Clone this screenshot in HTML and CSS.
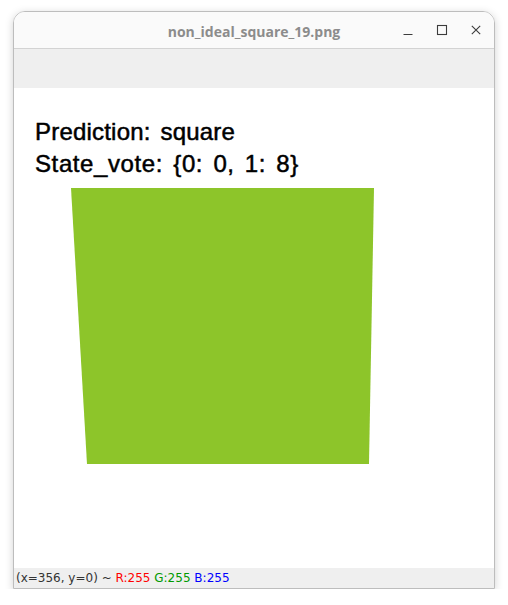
FILE: index.html
```html
<!DOCTYPE html>
<html>
<head>
<meta charset="utf-8">
<link rel="stylesheet" href="styles.css">
</head>
<body>
<div class="window">
  <div class="titlebar">
    <div class="title">non_ideal_square_19.png</div>
    <div class="controls">
      <svg class="btn" width="12" height="12" viewBox="0 0 12 12"><path d="M1.5 10.5h9" stroke="#3c3c3c" stroke-width="1.1" fill="none"/></svg>
      <svg class="btn" width="12" height="12" viewBox="0 0 12 12"><rect x="1.5" y="1.5" width="9" height="9" stroke="#3c3c3c" stroke-width="1.1" fill="none"/></svg>
      <svg class="btn" width="12" height="12" viewBox="0 0 12 12"><path d="M1.8 1.8L10.2 10.2M10.2 1.8L1.8 10.2" stroke="#3c3c3c" stroke-width="1.1" fill="none"/></svg>
    </div>
  </div>
  <div class="toolbar"></div>
  <div class="canvas">
    <div class="label">Prediction: square</div>
    <div class="label label-wide">State_vote: {0: 0, 1: 8}</div>
    <div class="shape"></div>
  </div>
  <div class="status">(x=356, y=0) ~ <span class="r">R:255</span> <span class="g">G:255</span> <span class="b">B:255</span></div>
</div>
</body>
</html>
```
FILE: styles.css
```css
html, body {
  margin: 0;
  padding: 0;
  background: #ffffff;
}
.window {
  margin: 11px 0 0 13px;
  width: 480px;
  border: 1px solid #bdbdbd;
  border-radius: 12px 12px 0 0;
  overflow: hidden;
  box-shadow: 0 2px 8px rgba(0,0,0,0.18);
}
.titlebar {
  height: 36px;
  background: #fafafa;
  border-bottom: 1px solid #d3d3d3;
  display: flex;
  align-items: center;
  justify-content: center;
  position: relative;
}
.title {
  font-family: "Open Sans", "DejaVu Sans", sans-serif;
  font-weight: 700;
  font-size: 14px;
  color: #8c8c8c;
  margin-top: 2px;
}
.controls {
  position: absolute;
  right: 12px;
  top: 12px;
  display: flex;
  gap: 22px;
}
.btn {
  display: block;
}
.toolbar {
  height: 39px;
  background: #efefef;
}
.canvas {
  height: 480px;
  background: #ffffff;
  display: flex;
  flex-direction: column;
}
.label {
  font-family: "Liberation Sans", Arial, sans-serif;
  font-size: 24px;
  line-height: 32px;
  color: #000;
  padding-left: 21px;
  letter-spacing: 0.2px;
  word-spacing: 3px;
  -webkit-text-stroke: 0.5px #000;
}
.label-wide {
  letter-spacing: 0.6px;
}
.label:first-child {
  margin-top: 28px;
}
.shape {
  margin-top: 8px;
  margin-left: 57px;
  width: 303px;
  height: 276px;
  background: #8dc52a;
  clip-path: polygon(0 0, 303px 0, 298px 276px, 16px 276px);
}
.status {
  height: 20px;
  background: #efefef;
  font-family: "DejaVu Sans", sans-serif;
  font-size: 12px;
  line-height: 20px;
  color: #333;
  padding-left: 2px;
  white-space: nowrap;
}
.r { color: #ff0000; }
.g { color: #009900; }
.b { color: #0000ff; }
```
